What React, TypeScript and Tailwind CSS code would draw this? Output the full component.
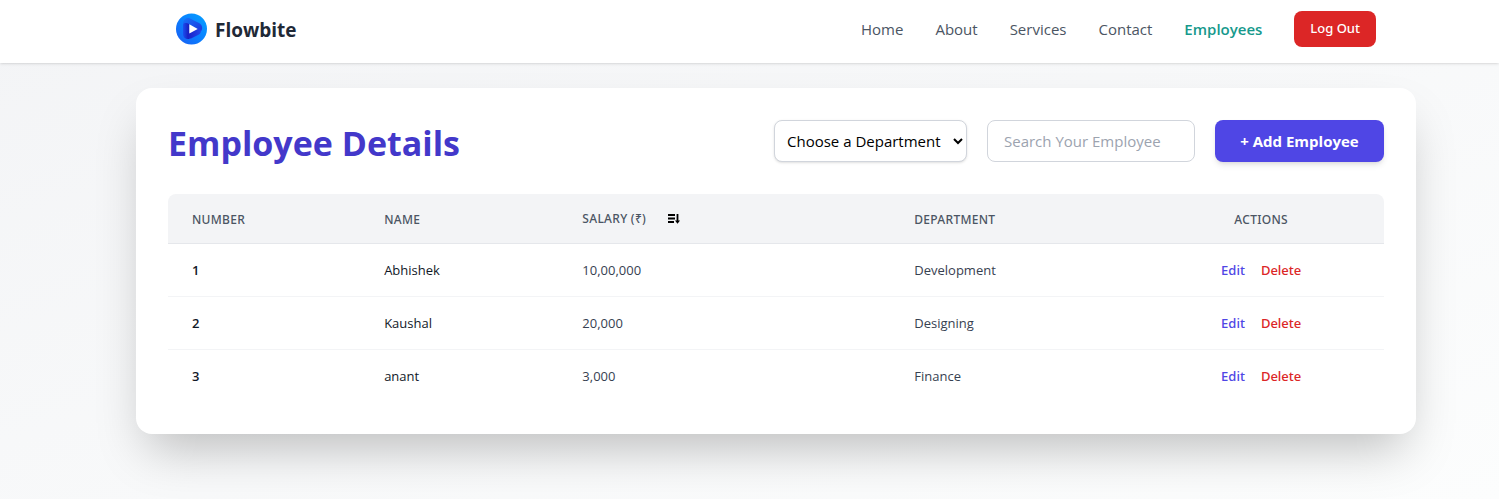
import React from "react";

const navLinks = ["Home", "About", "Services", "Contact"];

const employees = [
  { id: 1, name: "Abhishek", salary: "10,00,000", department: "Development" },
  { id: 2, name: "Kaushal", salary: "20,000", department: "Designing" },
  { id: 3, name: "anant", salary: "3,000", department: "Finance" },
];

function Logo() {
  return (
    <svg viewBox="0 0 31 32" className="h-8 w-[31px]" aria-hidden="true">
      <defs>
        <linearGradient id="disc" x1="0" y1="1" x2="1" y2="0">
          <stop offset="0" stopColor="#1a5cf2" />
          <stop offset="0.5" stopColor="#0a80ff" />
          <stop offset="1" stopColor="#05a2ff" />
        </linearGradient>
        <linearGradient id="side" x1="0" y1="0" x2="1" y2="0">
          <stop offset="0" stopColor="#1b4ff0" />
          <stop offset="1" stopColor="#1717b8" />
        </linearGradient>
        <linearGradient id="top" x1="0" y1="0" x2="1" y2="1">
          <stop offset="0" stopColor="#1673fa" />
          <stop offset="1" stopColor="#1d35dc" />
        </linearGradient>
        <linearGradient id="base" x1="0" y1="0" x2="1" y2="0">
          <stop offset="0" stopColor="#1a1fc6" />
          <stop offset="1" stopColor="#2347ea" />
        </linearGradient>
      </defs>
      <circle cx="15.5" cy="16" r="15.5" fill="url(#disc)" />
      <path d="M7 12c0-2.500 2-3.500 6.500-3.500V26C9.500 26.500 7 24.500 7 21z" fill="url(#side)" />
      <path d="M7 11C7 6.500 10.500 4 14 5.500l9 4.500c3.500 2 4 5.500 2 8.500l-3.500-2.500-8-4.800C10.500 9.500 8.500 9.500 7 11z" fill="url(#top)" />
      <path d="M21.500 15.500c4 0 4.500 4 1.500 6L16 25c-2.500 1.300-4.500 0-4.500-2.300 0-1.500.8-2.400 1.800-3z" fill="url(#base)" />
      <path d="M13.300 11.300v9.200l8.400-4.500z" fill="#fff" />
    </svg>
  );
}

function SortIcon() {
  return (
    <svg viewBox="0 0 12 12" className="h-3 w-3" aria-hidden="true">
      <path d="M0 2h7M0 5.500h7M0 9h6" stroke="#000" strokeWidth="1.8" />
      <path d="M9.500 1v8" stroke="#000" strokeWidth="1.8" />
      <path d="M7 7.500h5L9.500 10.800z" fill="#000" />
    </svg>
  );
}

export default function App() {
  return (
    <div className="min-h-screen bg-linear-to-br from-[#f3f4f6] to-[#fcfdfd] font-['Open_Sans','Noto_Sans',sans-serif] text-black">
      <header className="relative bg-white pt-[11px] pr-[83px] pb-4 pl-[136px] shadow-sm">
        <div className="flex max-w-7xl items-center justify-between px-10">
          <a href="#" className="flex items-center gap-2">
            <Logo />
            <span className="pt-0.5 text-[19px] font-bold text-[#1f2937]">Flowbite</span>
          </a>
          <nav className="flex items-center gap-8 text-[15px] text-[#4b5563]">
            {navLinks.map((label) => (
              <a key={label} href="#">{label}</a>
            ))}
            <a href="#" className="font-semibold text-[#16998c]">Employees</a>
            <button type="button" className="h-9 rounded-lg bg-[#dc2626] px-4 font-['Noto_Sans',sans-serif] text-[13px] font-medium text-white">
              Log Out
            </button>
          </nav>
        </div>
      </header>

      <main className="pt-[25px] pr-[83px] pb-16 pl-[136px]">
        <section className="max-w-7xl rounded-2xl bg-white p-8 shadow-2xl">
          <div className="mb-8 flex items-center justify-between">
            <h1 className="pt-1 text-[34px] leading-9 font-bold text-[#4338ca]">Employee Details</h1>
            <div className="flex items-center gap-5">
              <select
                aria-label="Department"
                className="h-[42px] w-[193px] rounded-lg border border-gray-300 bg-white px-2 text-[15px] shadow-sm"
              >
                <option>Choose a Department</option>
                <option>Development</option>
                <option>Designing</option>
                <option>Finance</option>
              </select>
              <input
                type="text"
                aria-label="Search employees"
                placeholder="Search Your Employee"
                className="h-[42px] w-52 rounded-lg border border-gray-300 px-4 text-[15px] placeholder:text-[#9ca3af]"
              />
              <button type="button" className="h-[42px] w-[169px] rounded-lg bg-[#4f46e5] text-[15px] font-bold text-white shadow-md">
                + Add Employee
              </button>
            </div>
          </div>

          <div className="overflow-hidden rounded-t-lg">
            <table className="w-full table-fixed border-collapse text-left text-[13px]">
              <thead className="bg-[#f3f4f6] font-['Noto_Sans',sans-serif] text-[12px] text-[#4b5563] uppercase">
                <tr className="h-[49px] border-b border-gray-200 tracking-wide">
                  <th className="w-[15.8%] px-6 pt-1 font-medium">Number</th>
                  <th className="w-[16.3%] px-6 pt-1 font-medium">Name</th>
                  <th className="w-[27.3%] px-6 pt-0.5 font-medium">
                    <div className="flex items-center gap-[22px]">
                      Salary (₹)
                      <button type="button" aria-label="Sort by salary"><SortIcon /></button>
                    </div>
                  </th>
                  <th className="w-[20.4%] px-6 pt-1 font-medium">Department</th>
                  <th className="px-6 pt-1 text-center font-medium">Actions</th>
                </tr>
              </thead>
              <tbody>
                {employees.map((e) => (
                  <tr key={e.id} className="h-[53px] border-b border-gray-100 last:border-b-0">
                    <td className="px-6 pt-0.5 font-semibold text-[#111827]">{e.id}</td>
                    <td className="px-6 pt-0.5 text-[#111827]">{e.name}</td>
                    <td className="px-6 pt-0.5 text-[#374151]">{e.salary}</td>
                    <td className="px-6 pt-0.5 text-[#374151]">{e.department}</td>
                    <td className="px-6 pt-0.5">
                      <div className="flex justify-center gap-4 font-['Noto_Sans',sans-serif] font-medium">
                        <button type="button" className="text-[#4f46e5]">Edit</button>
                        <button type="button" className="text-[#dc2626]">Delete</button>
                      </div>
                    </td>
                  </tr>
                ))}
              </tbody>
            </table>
          </div>
        </section>
      </main>
    </div>
  );
}
